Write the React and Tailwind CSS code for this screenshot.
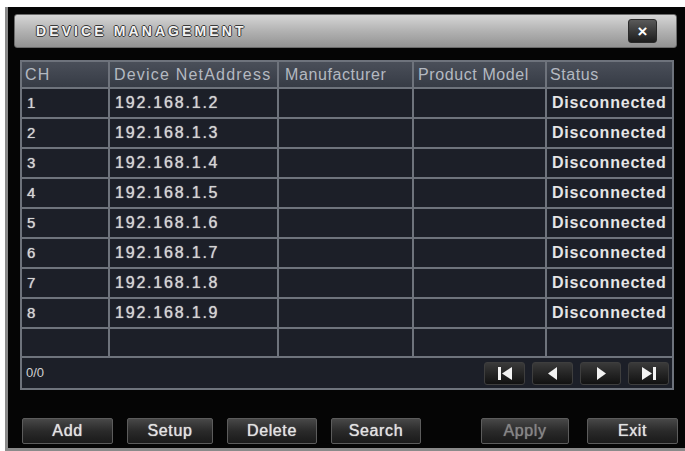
const rows = [
  { ch: "1", ip: "192.168.1.2" },
  { ch: "2", ip: "192.168.1.3" },
  { ch: "3", ip: "192.168.1.4" },
  { ch: "4", ip: "192.168.1.5" },
  { ch: "5", ip: "192.168.1.6" },
  { ch: "6", ip: "192.168.1.7" },
  { ch: "7", ip: "192.168.1.8" },
  { ch: "8", ip: "192.168.1.9" },
];

const cols = "grid grid-cols-[88px_169px_135px_133px_1fr]";
const cell = "border-r-2 border-b-2 border-[#6e737c] flex items-center";

const NavButton = ({ children }) => (
  <button className="w-[41px] h-[23px] rounded-[3px] bg-gradient-to-b from-[#3a3a3a] to-[#121212] border border-[#3e3e3e] flex items-center justify-center">
    {children}
  </button>
);

const ActionButton = ({ label, dim }) => (
  <button
    className={`h-[26px] rounded-[2px] border border-[#5c5c5c] bg-gradient-to-b from-[#484848] via-[#2a2a2a] to-[#1a1a1a] text-[16px] tracking-[0.6px] [text-shadow:0_0_1px_currentColor] ${
      dim ? "text-[#858585]" : "text-[#e2e2e2]"
    }`}
  >
    {label}
  </button>
);

const App = () => {
  return (
    <div className="w-[685px] h-[451px] bg-white pt-[7px] pl-[5px] font-['Liberation_Sans',Arial,sans-serif]">
      <div className="w-[680px] h-[444px] bg-[#050505] border-l-[3px] border-b-[3px] border-[#8a8a8a] flex flex-col">
        {/* title bar */}
        <div className="mt-[7px] ml-[6px] w-[663px] h-[34px] rounded-[3px] bg-gradient-to-b from-[#d6d6d6] via-[#b2b2b2] to-[#939393] border border-[#6a6a6a] flex items-center justify-between pl-[21px] pr-[19px]">
          <span className="text-[14px] font-bold tracking-[3.1px] text-[#f2f2f2] [text-shadow:1px_0_0_#3a3a3a,-1px_0_0_#3a3a3a,0_1px_0_#3a3a3a,0_-1px_0_#3a3a3a]">
            DEVICE MANAGEMENT
          </span>
          <button className="w-[29px] h-[24px] rounded-[3px] bg-gradient-to-b from-[#5a5a5a] to-[#1e1e1e] border border-[#2a2a2a] flex items-center justify-center text-white text-[17px] font-bold leading-none">
            ×
          </button>
        </div>

        {/* table */}
        <div className="mt-[12px] ml-[12px] w-[654px] border-l-2 border-t-2 border-[#6e737c] bg-[#1c1f28] text-[16px] tracking-[1.2px]">
          <div className={`${cols} h-[27px] bg-gradient-to-b from-[#4a4f59] to-[#353a44] text-[#b4b9c1]`}>
            <div className={`${cell} pl-[3px]`}>CH</div>
            <div className={`${cell} pl-[4px]`}>Device NetAddress</div>
            <div className={`${cell} pl-[6px] tracking-[0.6px]`}>Manufacturer</div>
            <div className={`${cell} pl-[4px] tracking-[0.6px]`}>Product Model</div>
            <div className={`${cell} pl-[3px] tracking-[0.6px]`}>Status</div>
          </div>
          {rows.map((r) => (
            <div key={r.ch} className={`${cols} h-[30px] text-[#d4d4d4] [text-shadow:0_0_1px_#d4d4d4]`}>
              <div className={`${cell} pl-[5px] text-[15px]`}>{r.ch}</div>
              <div className={`${cell} pl-[5px] tracking-[1.8px]`}>{r.ip}</div>
              <div className={cell}></div>
              <div className={cell}></div>
              <div className={`${cell} pl-[5px] tracking-[0.8px] font-bold text-[#e6e6e6] [text-shadow:none]`}>Disconnected</div>
            </div>
          ))}
          <div className={`${cols} h-[29px]`}>
            <div className={cell}></div>
            <div className={cell}></div>
            <div className={cell}></div>
            <div className={cell}></div>
            <div className={cell}></div>
          </div>
          <div className="h-[32px] border-r-2 border-b-2 border-[#6e737c] flex items-center justify-between pl-[4px] pr-[3px]">
            <span className="text-[13px] text-[#d0d0d0] tracking-normal">0/0</span>
            <div className="flex gap-[7px]">
              <NavButton>
                <svg width="16" height="13" viewBox="0 0 16 13">
                  <rect x="1" y="0" width="3" height="13" fill="#f2f2f2" />
                  <polygon points="15,0 15,13 5,6.5" fill="#f2f2f2" />
                </svg>
              </NavButton>
              <NavButton>
                <svg width="12" height="13" viewBox="0 0 12 13">
                  <polygon points="10,0 10,13 1,6.5" fill="#f2f2f2" />
                </svg>
              </NavButton>
              <NavButton>
                <svg width="12" height="13" viewBox="0 0 12 13">
                  <polygon points="2,0 2,13 11,6.5" fill="#f2f2f2" />
                </svg>
              </NavButton>
              <NavButton>
                <svg width="16" height="13" viewBox="0 0 16 13">
                  <polygon points="1,0 1,13 11,6.5" fill="#f2f2f2" />
                  <rect x="12" y="0" width="3" height="13" fill="#f2f2f2" />
                </svg>
              </NavButton>
            </div>
          </div>
        </div>

        {/* buttons */}
        <div className="mt-[28px] ml-[14px] w-[656px] flex">
          <div className="grid grid-cols-[91px_86px_90px_90px] gap-[14px]">
            <ActionButton label="Add" />
            <ActionButton label="Setup" />
            <ActionButton label="Delete" />
            <ActionButton label="Search" />
          </div>
          <div className="ml-auto grid grid-cols-[88px_91px] gap-[18px]">
            <ActionButton label="Apply" dim />
            <ActionButton label="Exit" />
          </div>
        </div>
      </div>
    </div>
  );
};

export default App;
